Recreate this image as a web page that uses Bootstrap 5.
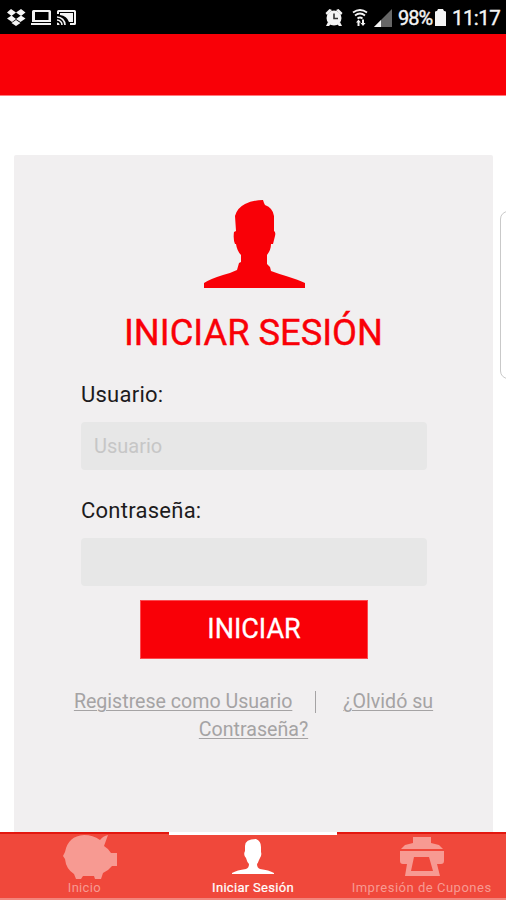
<!DOCTYPE html>
<html lang="es">
<head>
<meta charset="utf-8">
<meta name="viewport" content="width=device-width, initial-scale=1">
<title>Iniciar Sesión</title>
<link href="https://cdn.jsdelivr.net/npm/bootstrap@5.3.0/dist/css/bootstrap.min.css" rel="stylesheet">
<style>
body{font-family:Roboto,"Liberation Sans",sans-serif;height:900px;overflow:hidden}
.status{height:34px;background:#000;color:#f4f4f4;line-height:24px;padding:5px 8px 0 6px;white-space:nowrap}
.status svg{display:block;flex:none}
.pct{font-size:20px;letter-spacing:-1px;margin-left:6px;width:36px;-webkit-text-stroke:.4px #f4f4f4;line-height:27px}
.clock{font-size:20.5px;letter-spacing:-.6px;margin-left:5px;width:46px;-webkit-text-stroke:.4px #f4f4f4;line-height:27px}
.topbar{height:62px;background:#f90007;border-bottom:1px solid #ff7a7e}
.stage{padding:59px 13px 0 14px;background:#fff}
.panel{background:#f1eff0;height:100%;border-radius:2px 2px 0 0;padding:45px 0 0}
.edge{position:absolute;right:-12px;top:211px;width:18px;height:168px;border:1px solid #c9c9c9;border-radius:8px;background:#fff}
.title{font-size:36.3px;line-height:42px;color:#f90007;margin:24px 0 0;font-weight:400;white-space:nowrap;-webkit-text-stroke:.4px #f90007}
.fields{width:346px;margin-left:67px;padding-top:27px}
.fields label{font-size:22px;line-height:28px;color:#1d1b1c;display:block;letter-spacing:.25px}
.fields .form-control{height:48px;border:0;border-radius:4px;background:#e7e7e7;font-size:20px;padding:0 13px;margin-top:13px}
.fields .second{margin-top:27px}
.form-control::placeholder{color:#c6c6c6;opacity:1}
.go{width:228px;height:59px;background:#f90007;border:1px solid #fb4a50;color:#fff;font-size:27px;border-radius:0;padding:0;margin:14px 0 0 126px;-webkit-text-stroke:.3px #fff}
.links{font-size:19.6px;line-height:28px;color:#a5a3a4;margin-top:29px;white-space:nowrap}
.links a{color:inherit;text-decoration:underline;text-underline-offset:2px;text-decoration-thickness:1px}
.sep{width:1px;height:22px;background:#a5a3a4;margin:0 27px 0 23px}
.tabs{height:68px;background:#f0483b;border-top:2px solid #e3170f;border-bottom:2px solid #f2857c}
.tab-item{width:169px;height:66px;color:#f79a92;font-size:13px;line-height:16px;letter-spacing:.3px;text-decoration:none;white-space:nowrap}
.tab-item svg{display:block}
.tab-item .pig{margin-left:11px}
.tab-item .long{letter-spacing:.52px}
.tab-item.on{color:#fff;margin-top:-2px;border-top:3px solid #fff;-webkit-text-stroke:.2px #fff}
</style>
</head>
<body class="d-flex flex-column position-relative">
<div class="status d-flex align-items-start">
  <svg width="76" height="26" viewBox="0 0 76 26" fill="#f4f4f4">
    <path d="M5 4L10 7.500 5.500 11 1 7.600zM15 4l4.500 3.600L15 11l-5-3.500zM1 13.500l4.500-3L10 14l-4 3zM10 14l5-3.500 4.500 3-5 3.500zM10 15l4.500 3-4.500 3-4.500-3z"/>
    <path fill-rule="evenodd" d="M27.500 5h16a1.500 1.500 0 0 1 1.500 1.500V17h-19V6.500A1.500 1.500 0 0 1 27.500 5zM29 7v8h13.500V7zM25 18h20v2H25z"/>
    <path d="M51 9V6.500A1.500 1.500 0 0 1 52.500 5h16A1.500 1.500 0 0 1 70 6.500v12a1.500 1.500 0 0 1-1.500 1.500H64v-2h4V7H53v2z"/>
    <path d="M54 8h13v9h-4Q61 11 54 10z"/>
    <path d="M51 17.500a2.500 2.500 0 0 1 2.500 2.500H51z"/>
    <path fill="none" stroke="#f4f4f4" stroke-width="1.600" d="M51 15a5 5 0 0 1 5 5M51 12a8 8 0 0 1 8 8"/>
  </svg>
  <svg class="ms-auto" width="70" height="26" viewBox="0 0 70 26" fill="#f4f4f4">
    <circle cx="12" cy="13" r="7.500"/><path d="M3.500 8l4-4 2.500 1-5 5zM20.500 8l-4-4-2.500 1 5 5zM6 17l-2 4h3l2-2zM18 17l2 4h-3l-2-2z"/>
    <path d="M12 8.500v5h4" fill="none" stroke="#333" stroke-width="1.600"/>
    <path fill="none" stroke="#f4f4f4" stroke-width="1.800" d="M31 7.500q7-5 14 0M33 10.500q5-4 10 0M35.500 13.500q2.500-2 5 0"/>
    <path d="M34 17.500l2.500-3L39 17.500h-1.500V21h-2v-3.500zM38.500 18H40v-3.500h2V18h1.500L41 21z"/>
    <path fill="#666" d="M52 22L70 4v18z"/><path d="M52 22l7-7v7z"/>
  </svg>
  <span class="pct">98%</span>
  <svg width="13" height="26" viewBox="0 0 13 26"><path fill="#f4f4f4" d="M1 7q0-1 2-1l1-2h5l1 2q2 0 2 1v14H1z"/></svg>
  <span class="clock">11:17</span>
</div>
<header class="topbar"></header>
<main class="stage flex-fill">
  <form class="panel">
    <svg class="d-block mx-auto" width="102" height="88" viewBox="0 0 102 88"><path fill="#f90007" d="M60 0l1 3 1 2q8 3 9 11v15q2 1 1 5l-2 8h-2q0 6-4 11v9l3 3 1 4q8 3 15 5 13 4 19 7v6H1v-6q6-4 19-8 8-2 14-5l2-7 2-1V55q-4-4-5-11h-1q-2-5-1-12l2-1-1-15Q34 8 42 4q8-4 18-4z"/></svg>
    <h1 class="title text-center">INICIAR SESIÓN</h1>
    <div class="fields">
      <label for="user">Usuario:</label>
      <input id="user" class="form-control" placeholder="Usuario">
      <label for="pass" class="second">Contraseña:</label>
      <input id="pass" type="password" class="form-control">
    </div>
    <button type="button" class="go btn d-block">INICIAR</button>
    <div class="links">
      <div class="d-flex justify-content-center align-items-center"><a href="#">Registrese como Usuario</a><span class="sep"></span><a href="#">¿Olvidó su</a></div>
      <div class="text-center"><a href="#">Contraseña?</a></div>
    </div>
  </form>
</main>
<nav class="tabs d-flex">
  <a href="#" class="tab-item d-flex flex-column align-items-center"><svg class="pig" width="56" height="46" viewBox="0 0 56 46"><path fill="#f79a92" d="M3 18Q6 2 22 1q9 0 16 5 3-4 8-5l-4 11q5 3 7 7h6v13h-5q-4 5-9 7l-2 6h-6l-1-3H21l-2 3h-5l-2-5Q4 35 3 25l-2-3z"/></svg><span>Inicio</span></a>
  <a href="#" class="tab-item on d-flex flex-column align-items-center"><svg width="44" height="45" viewBox="0 0 44 45"><path fill="#fff" d="M25 4q5 2 5 8v5q1 3-1 6l-1 2q-1 3-2 4 0 4 3 5 9 1 14 4v1H1v-1q5-3 14-4 3-1 3-5-2-2-3-6-3-3-1-7v-5Q14 4 25 4z"/></svg><span>Iniciar Sesión</span></a>
  <a href="#" class="tab-item d-flex flex-column align-items-center"><svg width="46" height="46" viewBox="0 0 46 46"><path fill="#f79a92" fill-rule="evenodd" d="M14 3h18v6l8 2 4 4H2l4-4 8-2zM1 17h44v10q0 3-3 3h-4l3 12H6l2-12H4q-3 0-3-3zM15 23l-3 14h22l-4-14z"/></svg><span class="long">Impresión de Cupones</span></a>
</nav>
<div class="edge"></div>
<script src="https://cdn.jsdelivr.net/npm/bootstrap@5.3.0/dist/js/bootstrap.bundle.min.js"></script>
</body>
</html>
